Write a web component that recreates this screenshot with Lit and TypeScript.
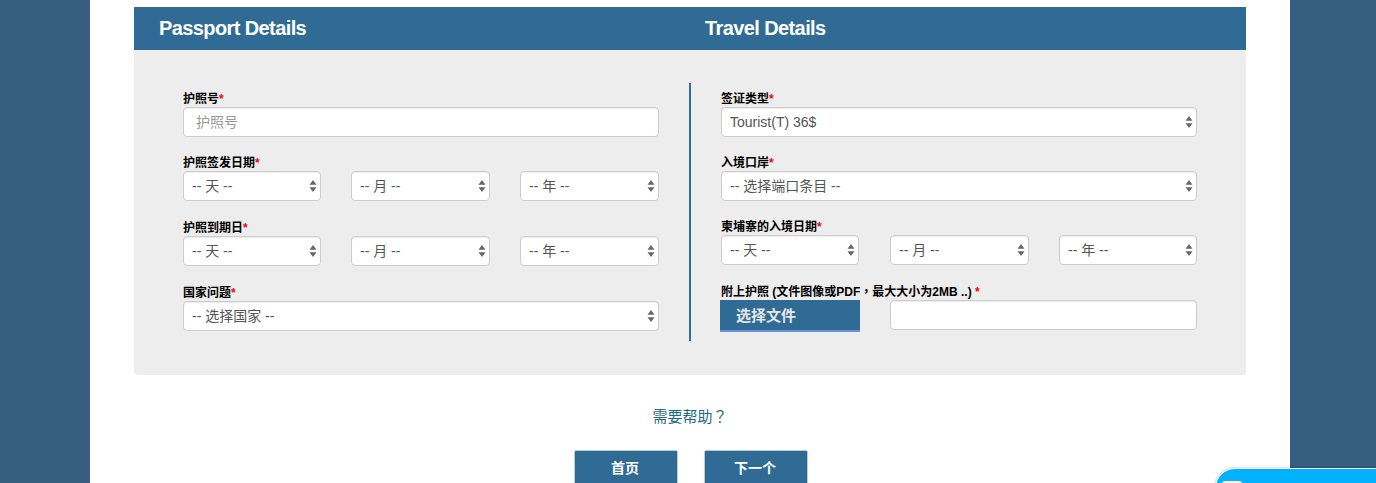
import { LitElement, html, css } from "lit";
import { customElement } from "lit/decorators.js";

const arrows = html`<svg class="arrows" width="8" height="14" viewBox="0 0 8 14" aria-hidden="true"><path d="M4 1 L7.5 5.8 H0.5 Z M4 13 L7.5 8.2 H0.5 Z" fill="#666"/></svg>`;

@customElement("app-root")
export class AppRoot extends LitElement {
  static styles = css`
    :host { display: block; height: 483px; overflow: hidden; background: #375e7e; font-family: "Liberation Sans", "Noto Sans CJK SC", sans-serif; position: relative; }
    .page { width: 1112px; height: 476px; margin: 0 auto 0 90px; padding: 7px 44px 0; background: #fff; }
    .head { display: flex; height: 43px; align-items: center; background: #2f6b94; color: #fff; font-size: 20px; font-weight: 700; letter-spacing: -0.6px; padding-left: 25px; }
    .head span:first-child { width: 546px; }
    .panel { display: flex; gap: 30px; padding: 33px 49px 34px; background: #ededed; border-radius: 0 0 4px 4px; }
    .col { width: 476px; padding: 7px 0 9px; box-sizing: border-box; }
    .col.left { padding-bottom: 10px; }
    .rule { width: 2px; background: #2f6b94; }
    .field { margin-bottom: 18px; }
    .field:last-child { margin-bottom: 0; }
    .field.tight { margin-bottom: 17px; }
    label, .lbl { display: block; height: 17px; font-size: 12px; line-height: 19px; font-weight: 700; color: #000; white-space: nowrap; }
    .req { color: #f00; }
    .tc { font-family: "Noto Sans CJK TC", sans-serif; line-height: 0; }
    .trio { display: grid; grid-template-columns: 138px 139px 139px; gap: 30px; }
    .trio.r { grid-template-columns: 138px 140px 138px; }
    .trio.r .box:nth-child(2) { margin-left: 1px; }
    .box { position: relative; height: 30px; }
    input, select { box-sizing: border-box; display: block; width: 100%; height: 30px; margin: 0; border: 1px solid #ccc; border-radius: 4px; background: #fff; box-shadow: inset 0 1px 1px rgba(0,0,0,.075); font: 14px "Liberation Sans", "Noto Sans CJK SC", sans-serif; color: #555; outline: none; }
    input { padding: 0 12px; }
    input::placeholder { color: #999; }
    select { appearance: none; padding: 0 20px 0 8px; }
    .arrows { position: absolute; right: 4px; top: 8px; pointer-events: none; }
    .file { display: grid; grid-template-columns: 140px 307px; gap: 30px; margin-left: -1px; }
    .file button { box-sizing: border-box; height: 32px; padding: 0 0 2px 16px; text-align: left; border: 0; border-bottom: 2px solid #6a90d8; background: #2f6b94; color: #e6e6e6; font: 700 15px "Liberation Sans", "Noto Sans CJK SC", sans-serif; }
    .help { margin-top: 31px; text-align: center; font-size: 15px; line-height: 21px; color: #1e6b80; }
    .actions { display: flex; justify-content: center; gap: 26px; margin-top: 23px; padding-left: 2px; }
    .actions button { box-sizing: border-box; width: 104px; height: 38px; border: 1px solid #b9cbd8; border-radius: 2px; background: #2f6b94; color: #fff; font: 700 14px "Liberation Sans", "Noto Sans CJK SC", sans-serif; padding: 0 2px 5px 0; }
    .chat { position: absolute; left: 1215px; top: 468px; width: 180px; height: 40px; box-sizing: border-box; background: #00b2ff; border: 1px solid #fff; border-radius: 20px 0 0 0; box-shadow: 0 0 3px rgba(0,0,0,.3); }
    .chat i { display: block; width: 20px; height: 12px; margin: 12px 0 0 6px; background: #fff; border-radius: 3px; }
  `;

  private sel(text: string) {
    return html`<div class="box"><select><option>${text}</option></select>${arrows}</div>`;
  }

  private dates(right = false) {
    return html`<div class="trio ${right ? "r" : ""}">${this.sel("-- 天 --")}${this.sel("-- 月 --")}${this.sel("-- 年 --")}</div>`;
  }

  private label(text: string) {
    return html`<label>${text}<span class="req">*</span></label>`;
  }

  render() {
    return html`
      <div class="page">
        <div class="head"><span>Passport Details</span><span>Travel Details</span></div>
        <div class="panel">
          <div class="col left">
            <div class="field tight">${this.label("护照号")}<input placeholder="护照号" /></div>
            <div class="field">${this.label("护照签发日期")}${this.dates()}</div>
            <div class="field">${this.label("护照到期日")}${this.dates()}</div>
            <div class="field">${this.label("国家问题")}${this.sel("-- 选择国家 --")}</div>
          </div>
          <div class="rule"></div>
          <div class="col">
            <div class="field tight">${this.label("签证类型")}${this.sel("Tourist(T) 36$")}</div>
            <div class="field tight">${this.label("入境口岸")}${this.sel("-- 选择端口条目 --")}</div>
            <div class="field">${this.label("柬埔寨的入境日期")}${this.dates(true)}</div>
            <div class="field">
              <div class="lbl">附上护照 (文件图像或PDF<span class="tc">，</span>最大大小为2MB ..) <span class="req">*</span></div>
              <div class="file"><button>选择文件</button><input /></div>
            </div>
          </div>
        </div>
        <div class="help">需要帮助<span class="tc">？</span></div>
        <div class="actions"><button>首页</button><button>下一个</button></div>
      </div>
      <div class="chat"><i></i></div>
    `;
  }
}
